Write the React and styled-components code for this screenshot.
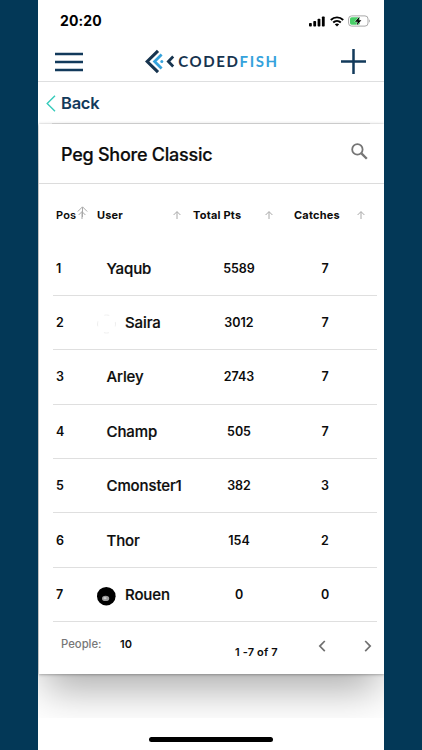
import styled, { createGlobalStyle } from "styled-components";

const GlobalStyle = createGlobalStyle`
  * {
    box-sizing: border-box;
  }

  body {
    margin: 0;
    background: #033857;
    font-family: Inter, "Liberation Sans", sans-serif;
    color: #0c0c0c;
  }

  svg {
    display: block;
    flex-shrink: 0;
  }
`;

const Screen = styled.div`
  display: flex;
  flex-direction: column;

  width: 346px;
  height: 750px;
  margin-left: 38px;

  background-color: #fff;
  overflow: hidden;
`;

const StatusBar = styled.div`
  display: flex;
  align-items: center;
  justify-content: space-between;

  height: 42px;
  padding: 0 13px 0 22px;
`;

const Time = styled.div`
  font-size: 14px;
  font-weight: 700;
  line-height: 20px;
  letter-spacing: 0.1px;
  color: #000;
`;

const StatusIcons = styled.div`
  display: flex;
  align-items: center;
  gap: 4.5px;
`;

const NavBar = styled.header`
  display: flex;
  align-items: center;
  justify-content: space-between;

  height: 40px;
  padding: 0 18px 0 17px;

  border-bottom: 1px solid #dedfe0;
`;

const Logo = styled.div`
  display: flex;
  align-items: center;
  gap: 3px;
`;

const Wordmark = styled.div`
  margin-top: -2px;

  font-family: Lato, sans-serif;
  font-size: 15px;
  font-weight: 700;
  line-height: 18px;
  letter-spacing: 1.6px;
  color: #17344f;

  span {
    color: #35a2dc;
  }
`;

const BackRow = styled.div`
  display: flex;
  align-items: center;
  gap: 5px;

  height: 39px;
  padding: 3px 0 0 8px;

  font-size: 16.5px;
  font-weight: 600;
  letter-spacing: -0.25px;
  color: #123a5b;
`;

const Content = styled.main`
  height: 597px;
  padding-top: 3px;
  overflow: hidden;
`;

const TopEdge = styled.div`
  height: 1px;
  margin: -1px 14px 0;
  background-color: #e6e6e6;
`;

const Card = styled.section`
  display: flex;
  flex-direction: column;

  height: 550px;
  margin-left: 1px;

  background-color: #fff;
  box-shadow: 0 0 2px rgba(0, 0, 0, 0.2), 0 1px 3px rgba(0, 0, 0, 0.2),
    0 22px 38px -6px rgba(0, 0, 0, 0.32);
`;

const CardHeader = styled.div`
  display: flex;
  align-items: center;
  justify-content: space-between;

  height: 60px;
  padding: 0 16px 0 22px;

  border-bottom: 1px solid #dcdcdc;

  svg {
    margin-top: -5px;
  }
`;

const Title = styled.h1`
  margin: 1px 0 0;

  font-size: 18px;
  font-weight: 500;
  letter-spacing: -0.25px;
  -webkit-text-stroke: 0.2px #0c0c0c;
`;

const TableHead = styled.div`
  display: grid;
  grid-template-columns: 41px 96px 101px 80px;
  align-items: center;

  height: 57.4px;
  padding: 5px 0 0 17px;
`;

const HeadCell = styled.div`
  display: flex;
  align-items: center;
  justify-content: space-between;

  padding-right: ${(props) => props.$right || 0}px;

  font-size: 11px;
  font-weight: ${(props) => props.$weight || 700};
  line-height: 14px;
  letter-spacing: 0.2px;
  white-space: nowrap;
`;

const SortIcons = styled.span`
  display: flex;
  margin: -5px 0 0;

  svg + svg {
    margin: 5px 1.5px 0 -9.5px;
  }
`;

const Row = styled.div`
  display: grid;
  grid-template-columns: 44px 95px 88px 84px;
  align-items: center;

  height: 54.4px;
  margin: 0 7px 0 14px;
  padding-left: 3px;

  border-bottom: 1px solid #dfdfdf;

  font-size: 12.5px;
  font-weight: 600;
`;

const User = styled.div`
  display: flex;
  align-items: center;
  gap: 9px;

  margin-left: -3px;
  padding-left: ${(props) => (props.$indent ? 9.5 : 0)}px;

  font-size: 15px;
  font-weight: 500;
  letter-spacing: -0.12px;
  white-space: nowrap;
  -webkit-text-stroke: 0.2px #0c0c0c;
`;

const Score = styled.div`
  text-align: center;
`;

const Footer = styled.div`
  display: grid;
  grid-template-columns: 59px 115px 76px 1fr;
  align-items: start;

  padding: 15px 8px 0 22px;

  font-size: 11px;
  font-weight: 600;
  line-height: 15px;
`;

const FooterLabel = styled.span`
  font-size: 11.3px;
  font-weight: 500;
  color: #777;
`;

const PageRange = styled.span`
  padding-top: 8px;
  letter-spacing: 0.15px;
`;

const Pager = styled.div`
  display: flex;
  justify-content: space-between;
  padding: 3px 4px 0 7px;
`;

const HomeBar = styled.div`
  width: 124px;
  height: 5px;
  margin: 19px auto 0;

  border-radius: 3px;
  background-color: #000;
`;

const players = [
  { pos: 1, name: "Yaqub", points: 5589, catches: 7 },
  { pos: 2, name: "Saira", points: 3012, catches: 7, avatar: "light" },
  { pos: 3, name: "Arley", points: 2743, catches: 7 },
  { pos: 4, name: "Champ", points: 505, catches: 7 },
  { pos: 5, name: "Cmonster1", points: 382, catches: 3 },
  { pos: 6, name: "Thor", points: 154, catches: 2 },
  { pos: 7, name: "Rouen", points: 0, catches: 0, avatar: "dark" },
];

const Avatar = ({ kind }) => (
  <svg width="19" height="24" viewBox="0 0 19 24">
    {kind === "dark" ? (
      <>
        <circle cx="9.3" cy="14.2" r="9.3" fill="#000" />
        <ellipse cx="8.6" cy="16.4" rx="3.6" ry="2.6" fill="#999" />
        <ellipse cx="8" cy="16.1" rx="1.6" ry="1.2" fill="#ccc" />
      </>
    ) : (
      <circle
        cx="9.5"
        cy="14"
        r="9"
        fill="none"
        stroke="#eaeaea"
        strokeWidth="0.8"
        strokeDasharray="5 9.14"
        strokeDashoffset="2.5"
      />
    )}
  </svg>
);

const SortArrow = ({ size = 8 }) => (
  <svg width={size} height={size} viewBox="0 0 8 8">
    <path
      d="M4 8V.8M.6 4L4 .6L7.4 4"
      fill="none"
      stroke="#a8a8a8"
      strokeWidth={8 / size}
    />
  </svg>
);

const Chevron = ({ flip }) => (
  <svg width="8" height="12" viewBox="0 0 8 12">
    <path
      d={flip ? "M1.2 1L6.2 6.1L1.2 11.2" : "M6.8 1L1.8 6.1L6.8 11.2"}
      fill="none"
      stroke="#707070"
      strokeWidth="1.7"
    />
  </svg>
);

const App = () => {
  return (
    <>
      <GlobalStyle />
      <Screen>
        <StatusBar>
          <Time>20:20</Time>
          <StatusIcons>
            <svg width="16" height="11" viewBox="0 0 16 11">
              <rect x="0" y="7" width="2.8" height="3.5" rx="0.8" />
              <rect x="4.3" y="5" width="2.8" height="5.5" rx="0.8" />
              <rect x="8.6" y="2.8" width="2.8" height="7.7" rx="0.8" />
              <rect x="12.9" y="0.5" width="2.8" height="10" rx="0.8" />
            </svg>
            <svg width="14" height="11" viewBox="0 0 14 11">
              <g fill="none" stroke="#000" strokeWidth="1.9">
                <path d="M.8 4C4.3 .5 9.7 .5 13.2 4" />
                <path d="M3.2 6.5C5.4 4.4 8.6 4.4 10.8 6.5" />
              </g>
              <path d="M4.8 8.3Q7 6.5 9.2 8.3L7 10.6Z" />
            </svg>
            <svg width="23" height="12" viewBox="0 0 23 12">
              <rect
                x="0.6"
                y="0.9"
                width="19.4"
                height="10.2"
                rx="3"
                fill="none"
                stroke="#a8a8a8"
              />
              <rect x="2" y="2.3" width="10" height="7.4" rx="1.6" fill="#48cf67" />
              <path d="M21 4.3Q22.8 6 21 7.7Z" fill="#999" />
              <path
                d="M11.7 1.4L6.9 6.7H9.7L8.6 10.6L13.4 5.3H10.6Z"
                stroke="#fff"
                strokeWidth="0.8"
                paintOrder="stroke"
              />
            </svg>
          </StatusIcons>
        </StatusBar>

        <NavBar>
          <svg width="28" height="20" viewBox="0 0 28 20">
            <path
              d="M0 2H28M0 10H28M0 18H28"
              stroke="#123a5b"
              strokeWidth="2.4"
            />
          </svg>
          <Logo>
            <svg width="30" height="26" viewBox="0 0 30 26" fill="none">
              <path
                d="M13 1.8L2.2 12.5L13 23.2"
                stroke="#17344f"
                strokeWidth="3.1"
              />
              <path
                d="M16.6 5.6L9.6 12.5L16.6 19.4"
                stroke="#35a2dc"
                strokeWidth="2.8"
              />
              <circle cx="16.8" cy="12.5" r="1.5" fill="#35a2dc" />
              <path
                d="M28.2 7.6L23.4 12.5L28.2 17.4"
                stroke="#17344f"
                strokeWidth="2.8"
              />
            </svg>
            <Wordmark>
              CODED<span>FISH</span>
            </Wordmark>
          </Logo>
          <svg width="25" height="25" viewBox="0 0 25 25">
            <path
              d="M12.5 0V25M0 12.5H25"
              stroke="#123a5b"
              strokeWidth="2.5"
            />
          </svg>
        </NavBar>

        <BackRow>
          <svg width="10" height="17" viewBox="0 0 10 17">
            <path
              d="M9 .8L1.2 8.5L9 16.2"
              fill="none"
              stroke="#36cbbb"
              strokeWidth="1.4"
            />
          </svg>
          Back
        </BackRow>

        <Content>
          <TopEdge />
          <Card>
            <CardHeader>
              <Title>Peg Shore Classic</Title>
              <svg width="17" height="17" viewBox="0 0 17 17">
                <g fill="none" stroke="#757575">
                  <circle cx="6.4" cy="6.4" r="5.2" strokeWidth="1.8" />
                  <path d="M10.4 10.4L15.8 15.8" strokeWidth="2.3" />
                </g>
              </svg>
            </CardHeader>

            <TableHead>
              <HeadCell $right={9.5} $weight={600}>
                Pos
                <SortIcons>
                  <SortArrow size={11} />
                  <SortArrow />
                </SortIcons>
              </HeadCell>
              <HeadCell $right={12}>
                User
                <SortArrow />
              </HeadCell>
              <HeadCell $right={21}>
                Total Pts
                <SortArrow />
              </HeadCell>
              <HeadCell $right={9}>
                Catches
                <SortArrow />
              </HeadCell>
            </TableHead>

            {players.map((player) => (
              <Row key={player.pos}>
                <span>{player.pos}</span>
                <User $indent={!player.avatar}>
                  {player.avatar && <Avatar kind={player.avatar} />}
                  {player.name}
                </User>
                <Score>{player.points}</Score>
                <Score>{player.catches}</Score>
              </Row>
            ))}

            <Footer>
              <FooterLabel>People:</FooterLabel>
              <span>10</span>
              <PageRange>1 -7 of 7</PageRange>
              <Pager>
                <Chevron />
                <Chevron flip />
              </Pager>
            </Footer>
          </Card>
        </Content>

        <HomeBar />
      </Screen>
    </>
  );
};

export default App;
